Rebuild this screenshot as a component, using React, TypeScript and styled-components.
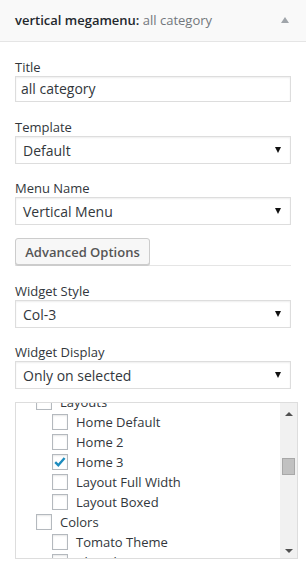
import React, { useLayoutEffect, useRef } from "react";
import styled, { createGlobalStyle } from "styled-components";

const Global = createGlobalStyle`
  html, body { margin: 0; padding: 0; background: #fff; }
  body { font-family: "Open Sans", "Noto Sans", sans-serif; color: #32373c; }
  * { box-sizing: border-box; }
`;

const Widget = styled.div`
  width: 306px;
  background: #fff;
`;

const Header = styled.div`
  height: 42px;
  background: #f9f9f9;
  border-bottom: 1px solid #e5e5e5;
  display: flex;
  align-items: center;
  justify-content: space-between;
  padding: 0 17px 1px 15px;
`;

const HeaderTitle = styled.div`
  font-size: 13px;
  font-weight: 600;
  color: #23282d;
  white-space: nowrap;
`;

const InTitle = styled.span`
  font-weight: 400;
  color: #72777c;
`;

const ToggleArrow = styled.span`
  width: 0;
  height: 0;
  border-left: 4px solid transparent;
  border-right: 4px solid transparent;
  border-bottom: 6px solid #a0a5aa;
  margin-top: -1px;
`;

const Body = styled.div`
  padding: 16px 15px 0 15px;
  display: flex;
  flex-direction: column;
`;

const Field = styled.div<{ $top: number }>`
  margin-top: ${(p) => p.$top}px;
  display: flex;
  flex-direction: column;
`;

const Label = styled.label`
  font-size: 13px;
  line-height: 18px;
  height: 18px;
  color: #32373c;
`;

const TextInput = styled.div`
  height: 26px;
  width: 276px;
  border: 1px solid #ddd;
  box-shadow: inset 0 1px 2px rgba(0, 0, 0, 0.07);
  padding: 0 5px;
  font-size: 14px;
  line-height: 24px;
  color: #32373c;
`;

const Select = styled.div`
  height: 28px;
  width: 276px;
  border: 1px solid #ddd;
  box-shadow: inset 0 1px 2px rgba(0, 0, 0, 0.07);
  padding: 0 9px 0 7px;
  display: flex;
  align-items: center;
  justify-content: space-between;
  font-size: 14px;
  color: #32373c;
`;

const SelectArrow = styled.span`
  width: 0;
  height: 0;
  border-left: 3.5px solid transparent;
  border-right: 3.5px solid transparent;
  border-top: 6px solid #111;
`;

const ButtonRow = styled.div`
  margin-top: 13px;
  width: 276px;
  height: 28px;
  border-bottom: 1px solid #e5e5e5;
  display: flex;
`;

const Button = styled.div`
  height: 27px;
  width: 135px;
  border: 1px solid #ccc;
  border-radius: 3px;
  background: #f7f7f7;
  box-shadow: 0 1px 0 #ccc;
  font-size: 13px;
  font-weight: 600;
  color: #555;
  display: flex;
  align-items: center;
  justify-content: center;
`;

const ListBox = styled.div`
  margin-top: 13px;
  width: 283px;
  height: 157px;
  border: 1px solid #ddd;
  display: flex;
`;

const ListViewport = styled.div`
  flex: 1;
  overflow: hidden;
`;

const Row = styled.div<{ $level: number }>`
  height: 20px;
  display: flex;
  align-items: center;
  padding-left: ${(p) => 4 + p.$level * 16}px;
  font-size: 13px;
  color: #32373c;
  white-space: nowrap;
`;

const Box = styled.span`
  width: 16px;
  height: 16px;
  border: 1px solid #b4b9be;
  background: #fff;
  box-shadow: inset 0 1px 2px rgba(0, 0, 0, 0.1);
  margin-right: 8px;
  display: flex;
  align-items: center;
  justify-content: center;
  flex: none;
`;

const Scrollbar = styled.div`
  width: 17px;
  background: #f1f1f1;
  display: flex;
  flex-direction: column;
  align-items: center;
  justify-content: space-between;
  padding: 9px 0 5px;
`;

const ScrollUp = styled.span`
  width: 0;
  height: 0;
  border-left: 4px solid transparent;
  border-right: 4px solid transparent;
  border-bottom: 4px solid #505050;
`;

const ScrollDown = styled.span`
  width: 0;
  height: 0;
  border-left: 4px solid transparent;
  border-right: 4px solid transparent;
  border-top: 4px solid #505050;
`;

const Track = styled.div`
  flex: 1;
  width: 100%;
  display: flex;
  flex-direction: column;
  align-items: center;
  padding-top: 42px;
`;

const Thumb = styled.div`
  width: 13px;
  height: 17px;
  background: #c1c1c1;
  border: 1px solid #a8a8a8;
`;

const Check = () => (
  <svg width="14" height="14" viewBox="0 0 14 14">
    <path d="M2.2 7.2 L5.3 10.2 L11.6 3" fill="none" stroke="#1e8cbe" strokeWidth="2.4" strokeLinecap="butt" />
  </svg>
);

type Item = { label: string; level: number; checked?: boolean };

const items: Item[] = [
  { label: "Layouts", level: 1 },
  { label: "Home Default", level: 2 },
  { label: "Home 2", level: 2 },
  { label: "Home 3", level: 2, checked: true },
  { label: "Layout Full Width", level: 2 },
  { label: "Layout Boxed", level: 2 },
  { label: "Colors", level: 1 },
  { label: "Tomato Theme", level: 2 },
  { label: "Blue Theme", level: 2 },
];

const SelectField = ({ label, value, top }: { label: string; value: string; top: number }) => (
  <Field $top={top}>
    <Label>{label}</Label>
    <Select>
      <span>{value}</span>
      <SelectArrow />
    </Select>
  </Field>
);

export default function App() {
  const vp = useRef<HTMLDivElement>(null);
  useLayoutEffect(() => {
    if (vp.current) vp.current.scrollTop = 11;
  }, []);
  return (
    <>
      <Global />
      <Widget>
        <Header>
          <HeaderTitle>
            vertical megamenu: <InTitle>all category</InTitle>
          </HeaderTitle>
          <ToggleArrow />
        </Header>
        <Body>
          <Field $top={0}>
            <Label>Title</Label>
            <TextInput>all category</TextInput>
          </Field>
          <SelectField label="Template" value="Default" top={16} />
          <SelectField label="Menu Name" value="Vertical Menu" top={15} />
          <ButtonRow>
            <Button>Advanced Options</Button>
          </ButtonRow>
          <SelectField label="Widget Style" value="Col-3" top={16} />
          <SelectField label="Widget Display" value="Only on selected" top={15} />
          <ListBox>
            <ListViewport ref={vp}>
              {items.map((it) => (
                <Row key={it.label} $level={it.level}>
                  <Box>{it.checked ? <Check /> : null}</Box>
                  {it.label}
                </Row>
              ))}
            </ListViewport>
            <Scrollbar>
              <ScrollUp />
              <Track>
                <Thumb />
              </Track>
              <ScrollDown />
            </Scrollbar>
          </ListBox>
        </Body>
      </Widget>
    </>
  );
}
